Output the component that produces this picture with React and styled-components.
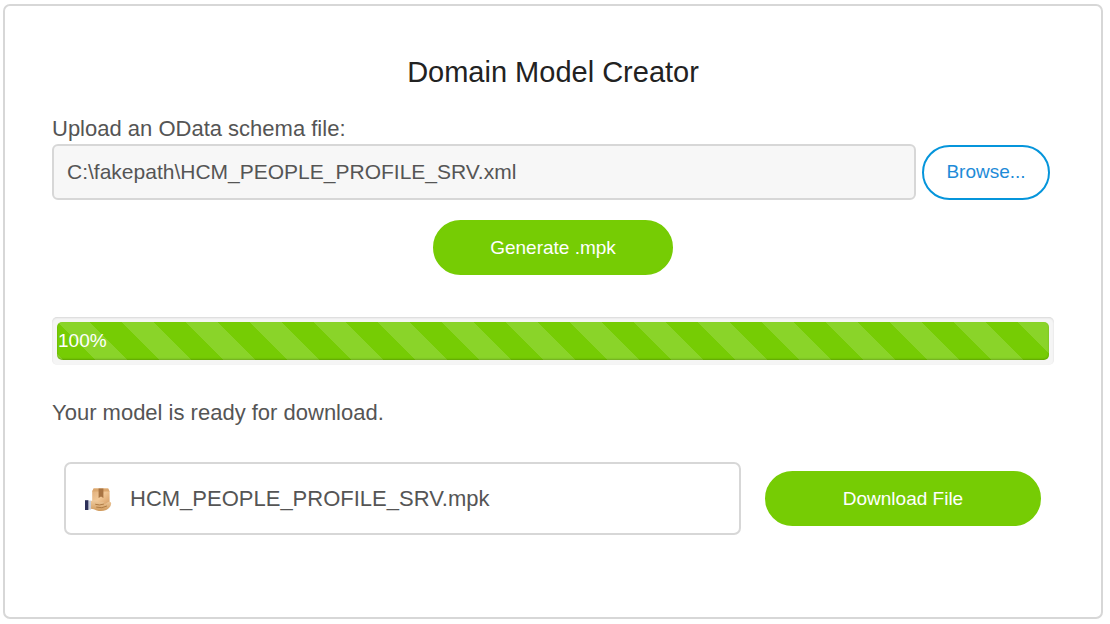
import React from "react";
import styled, { createGlobalStyle } from "styled-components";

const GlobalStyle = createGlobalStyle`
  *, *::before, *::after { box-sizing: border-box; }
  body {
    margin: 0;
    background: #fff;
    color: #555;
    font-family: "Liberation Sans", Arial, sans-serif;
    font-size: 22px;
    line-height: 32px;
  }
`;

const Page = styled.div`
  padding: 4px 7px 5px 3px;
`;

const Card = styled.main`
  border: 2px solid #d7d7d7;
  border-radius: 7px;
  padding: 46px 47px 82px;
`;

const Title = styled.h1`
  margin: 0 0 22px;
  color: #222;
  font-size: 29px;
  font-weight: 400;
  line-height: 40px;
  text-align: center;
`;

const Label = styled.label`
  display: block;
  line-height: 30px;
`;

const UploadRow = styled.div`
  display: flex;
  align-items: center;
  gap: 6px;
  padding-right: 4px;
`;

const PathInput = styled.input`
  flex: 1;
  min-width: 0;
  height: 56px;
  padding: 0 13px;
  border: 2px solid #d7d7d7;
  border-radius: 6px;
  background: #f7f7f7;
  color: #555;
  font-family: inherit;
  font-size: 21px;
  outline: none;
`;

const Button = styled.button`
  flex: none;
  width: ${(p) => p.$width}px;
  height: 55px;
  padding: 0;
  border: 2px solid ${(p) => (p.$outline ? "#0595db" : "#76cc04")};
  border-radius: 28px;
  background: ${(p) => (p.$outline ? "#fff" : "#76cc04")};
  color: ${(p) => (p.$outline ? "#1e8bd8" : "#fff")};
  font-family: inherit;
  font-size: 19px;
  cursor: pointer;
`;

const Actions = styled.div`
  display: flex;
  justify-content: center;
  margin: 20px 0 42px;
`;

const Track = styled.div`
  padding: 5px;
  border-radius: 5px;
  background: #f5f5f5;
  box-shadow: inset 0 1px 2px rgba(0, 0, 0, 0.12);
`;

const Bar = styled.div`
  height: 38px;
  border-radius: 5px;
  padding-left: 1px;
  background-color: #76cc04;
  background-image: linear-gradient(
    45deg,
    rgba(255, 255, 255, 0.15) 25%,
    transparent 25%,
    transparent 50%,
    rgba(255, 255, 255, 0.15) 50%,
    rgba(255, 255, 255, 0.15) 75%,
    transparent 75%
  );
  background-size: 64px 64px;
  box-shadow: inset 0 -1px 2px rgba(0, 0, 0, 0.2);
  color: #fff;
  font-size: 19px;
  line-height: 38px;
`;

const Status = styled.p`
  margin: 32px 0 33px;
`;

const ResultRow = styled.div`
  display: flex;
  align-items: center;
  gap: 24px;
  padding: 0 13px 0 12px;
`;

const FileBox = styled.div`
  display: flex;
  flex: 1;
  align-items: center;
  gap: 18px;
  min-width: 0;
  height: 73px;
  padding: 0 18px;
  border: 2px solid #d7d7d7;
  border-radius: 7px;
`;

function PackageIcon() {
  return (
    <svg width="28" height="28" viewBox="0 0 28 28" aria-hidden="true">
      <defs>
        <linearGradient id="box" x1="0" y1="0" x2="1" y2="1">
          <stop offset="0" stopColor="#deab78" />
          <stop offset="0.5" stopColor="#f2c897" />
          <stop offset="1" stopColor="#d39a60" />
        </linearGradient>
        <linearGradient id="hand" x1="0" y1="0" x2="0" y2="1">
          <stop offset="0" stopColor="#efcb9f" />
          <stop offset="1" stopColor="#d09a5c" />
        </linearGradient>
      </defs>
      <path d="M9.6 3.4h14.6l1.4 3.2v12q0 1.6-1.6 1.6H9.8q-1.6 0-1.6-1.6v-12z" fill="url(#box)" />
      <path d="M9.6 3.4h14.6l1.4 3.2H8.2z" fill="#dba76f" />
      <path d="M14.6 3.4h4.8v9.6L17 11.4 14.6 13z" fill="#a87443" />
      <path
        d="M6.8 16q3-1.6 6-.2l3 1.4h3.4q1.6.6.4 1.8l1 .2 3.6-2.2q3-.8 3 1.6-.6 4.4-5 6.4-4.6 2-9.4.4-3-1.4-6-1.6z"
        fill="url(#hand)"
      />
      <path
        d="M11.6 19.4q3.8 1.4 8-.2M12.6 22.2q5.4 1.6 10-1"
        fill="none"
        stroke="#b07c45"
        strokeWidth="1"
        strokeLinecap="round"
      />
      <path d="M4.4 15.6H7v9H4.4z" fill="#c9cdd8" />
      <path d="M1 15.2h3.4v9.8H1z" fill="#2c2f58" />
    </svg>
  );
}

export default function App() {
  const progress = 100;
  return (
    <Page>
      <GlobalStyle />
      <Card>
        <Title>Domain Model Creator</Title>
        <Label htmlFor="schema">Upload an OData schema file:</Label>
        <UploadRow>
          <PathInput
            id="schema"
            type="text"
            readOnly
            value="C:\fakepath\HCM_PEOPLE_PROFILE_SRV.xml"
          />
          <Button type="button" $width={128} $outline>
            Browse...
          </Button>
        </UploadRow>
        <Actions>
          <Button type="button" $width={240}>
            Generate .mpk
          </Button>
        </Actions>
        <Track
          role="progressbar"
          aria-label="Model generation"
          aria-valuemin={0}
          aria-valuemax={100}
          aria-valuenow={progress}
        >
          <Bar style={{ width: `${progress}%` }}>{progress}%</Bar>
        </Track>
        <Status>Your model is ready for download.</Status>
        <ResultRow>
          <FileBox>
            <PackageIcon />
            <span>HCM_PEOPLE_PROFILE_SRV.mpk</span>
          </FileBox>
          <Button type="button" $width={276}>
            Download File
          </Button>
        </ResultRow>
      </Card>
    </Page>
  );
}
